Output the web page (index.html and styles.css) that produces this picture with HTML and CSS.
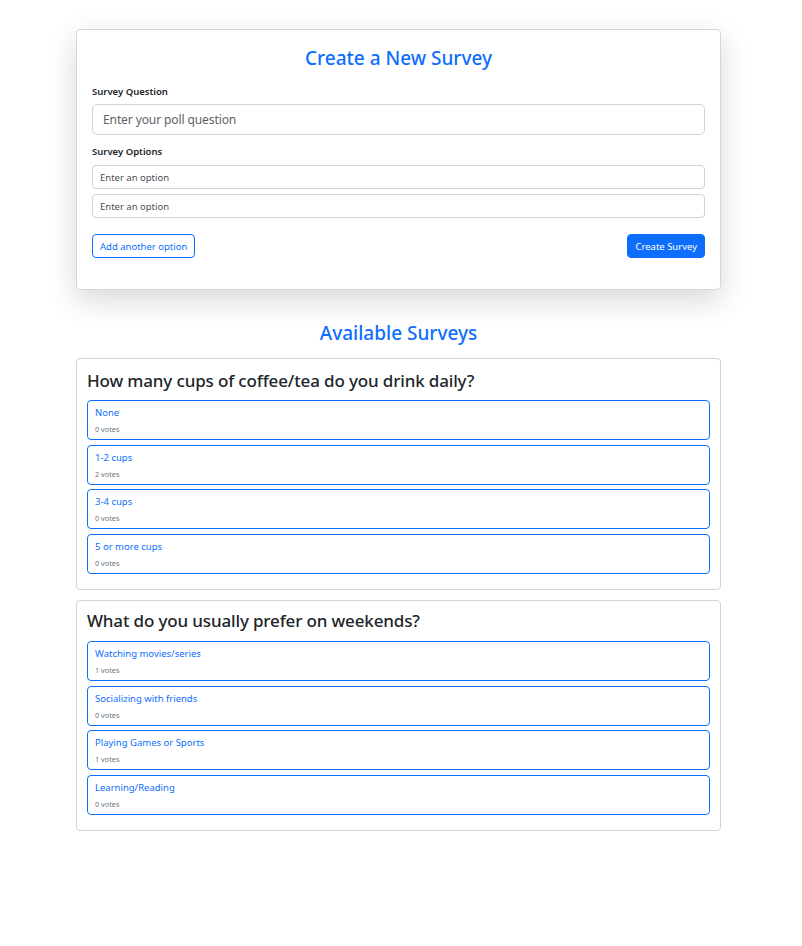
FILE: index.html
```html
<!DOCTYPE html>
<html lang="en">
<head>
<meta charset="utf-8">
<title>Surveys</title>
<link rel="stylesheet" href="styles.css">
</head>
<body>
<div class="page">
  <section class="create-card">
    <h2 class="heading">Create a New Survey</h2>
    <label class="field-label" for="q">Survey Question</label>
    <input id="q" class="input-lg" type="text" placeholder="Enter your poll question">
    <label class="field-label field-label-2">Survey Options</label>
    <div class="options-inputs">
      <input class="input-sm" type="text" placeholder="Enter an option">
      <input class="input-sm" type="text" placeholder="Enter an option">
    </div>
    <div class="actions">
      <button class="btn btn-outline" type="button">Add another option</button>
      <button class="btn btn-primary" type="button">Create Survey</button>
    </div>
  </section>

  <h2 class="heading heading-available">Available Surveys</h2>

  <section class="survey-card">
    <h3 class="survey-title">How many cups of coffee/tea do you drink daily?</h3>
    <div class="survey-options">
      <div class="option"><div class="option-name">None</div><div class="option-votes">0 votes</div></div>
      <div class="option"><div class="option-name">1-2 cups</div><div class="option-votes">2 votes</div></div>
      <div class="option"><div class="option-name">3-4 cups</div><div class="option-votes">0 votes</div></div>
      <div class="option"><div class="option-name">5 or more cups</div><div class="option-votes">0 votes</div></div>
    </div>
  </section>

  <section class="survey-card survey-card-2">
    <h3 class="survey-title">What do you usually prefer on weekends?</h3>
    <div class="survey-options">
      <div class="option"><div class="option-name">Watching movies/series</div><div class="option-votes">1 votes</div></div>
      <div class="option"><div class="option-name">Socializing with friends</div><div class="option-votes">0 votes</div></div>
      <div class="option"><div class="option-name">Playing Games or Sports</div><div class="option-votes">1 votes</div></div>
      <div class="option"><div class="option-name">Learning/Reading</div><div class="option-votes">0 votes</div></div>
    </div>
  </section>
</div>
</body>
</html>
```

FILE: styles.css
```css
* { box-sizing: border-box; }
body {
  margin: 0;
  background: #fff;
  font-family: "Noto Sans", "Open Sans", sans-serif;
  color: #212529;
}
.page {
  width: 645px;
  margin: 29px 0 0 76px;
}
.create-card {
  border: 1px solid #d6d6d6;
  border-radius: 4px;
  padding: 16px 15px 31px;
  box-shadow: 0 10px 30px rgba(0,0,0,0.16);
  display: flex;
  flex-direction: column;
}
.heading {
  margin: 0;
  font-size: 19px;
  line-height: 24px;
  font-weight: 500;
  color: #0d6efd;
  text-align: center;
}
.field-label {
  margin-top: 15px;
  font-size: 9.5px;
  line-height: 14px;
  font-weight: 600;
  color: #212529;
}
.field-label-2 { margin-top: 10px; }
.input-lg {
  margin-top: 5px;
  height: 31px;
  border: 1px solid #ced4da;
  border-radius: 5px;
  padding: 0 10px;
  font-family: inherit;
  font-size: 12px;
  letter-spacing: -0.1px;
  color: #212529;
}
.input-lg::placeholder { color: #5c636a; }
.options-inputs {
  margin-top: 6px;
  display: flex;
  flex-direction: column;
  gap: 5px;
}
.input-sm {
  height: 24px;
  border: 1px solid #ced4da;
  border-radius: 4px;
  padding: 0 7px;
  font-family: inherit;
  font-size: 9.5px;
  color: #212529;
}
.input-sm::placeholder { color: #4a4f55; }
.actions {
  margin-top: 16px;
  display: flex;
  justify-content: space-between;
}
.btn {
  height: 24px;
  padding: 0 7px;
  border-radius: 4px;
  font-family: inherit;
  font-size: 9.5px;
  border: 1px solid #0d6efd;
}
.btn-outline { background: #fff; color: #0d6efd; }
.btn-primary { background: #0d6efd; color: #fff; }
.heading-available {
  margin-top: 31px;
}
.survey-card {
  margin-top: 13px;
  border: 1px solid #d3d3d3;
  border-radius: 4px;
  padding: 11px 10px 15px;
}
.survey-card-2 { margin-top: 10px; padding-top: 9px; }
.survey-title {
  margin: 0;
  font-size: 17px;
  line-height: 22px;
  font-weight: 500;
  letter-spacing: -0.15px;
  color: #212529;
}
.survey-options {
  margin-top: 8px;
  display: flex;
  flex-direction: column;
  gap: 4.67px;
}
.survey-card-2 .survey-options { margin-top: 9px; }
.option {
  height: 40px;
  border: 1px solid #0d6efd;
  border-radius: 4px;
  padding: 5px 7px 0;
}
.option-name {
  font-size: 9.5px;
  line-height: 13px;
  color: #0d6efd;
}
.option-votes {
  margin-top: 5px;
  font-size: 7.3px;
  line-height: 10px;
  color: #6c757d;
}
```
